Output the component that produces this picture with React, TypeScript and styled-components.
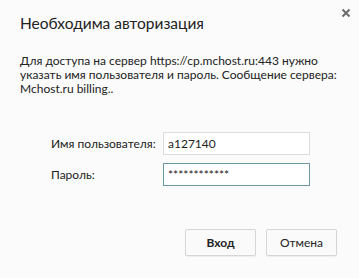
import React from "react";
import styled, { createGlobalStyle } from "styled-components";

const Global = createGlobalStyle`
  html, body { margin: 0; padding: 0; background: #fbfbfb; }
  * { box-sizing: border-box; }
`;

const Dialog = styled.div`
  position: relative;
  width: 359px;
  height: 278px;
  background: #fbfbfb;
  font-family: Lato, "Open Sans", sans-serif;
  color: #222;
  display: flex;
  flex-direction: column;
  padding: 0 20px;
`;

const Title = styled.h1`
  margin: 0;
  padding-top: 12px;
  font-size: 15.5px;
  font-weight: 400;
  line-height: 22px;
  color: #222;
`;

const Close = styled.button`
  position: absolute;
  top: 5px;
  right: 5px;
  width: 16px;
  height: 16px;
  border: 0;
  padding: 0;
  background: transparent;
  display: flex;
  align-items: center;
  justify-content: center;
`;

const Message = styled.p`
  margin: 20px 0 0;
  font-size: 12px;
  line-height: 14px;
  color: #222;
`;

const Form = styled.div`
  margin-top: 36px;
  display: grid;
  grid-template-columns: 112px 147px;
  row-gap: 8px;
  padding-left: 31px;
  align-items: center;
`;

const Label = styled.label`
  font-size: 12px;
  color: #222;
`;

const Input = styled.input<{ $focused?: boolean }>`
  width: 147px;
  height: 23px;
  border: 1px solid ${(p) => (p.$focused ? "#6f98a6" : "#dcdcdc")};
  background: #fff;
  font-family: inherit;
  font-size: 12px;
  color: #222;
  padding: 0 4px;
  outline: none;
`;

const Buttons = styled.div`
  margin-top: 43px;
  display: flex;
  justify-content: flex-end;
  gap: 10px;
  padding-right: 2px;
`;

const Button = styled.button<{ $primary?: boolean }>`
  width: 71px;
  height: 27px;
  border: 1px solid #d6d6d6;
  border-radius: 2px;
  background: #fafafa;
  font-family: inherit;
  font-size: 12px;
  font-weight: ${(p) => (p.$primary ? 700 : 400)};
  color: #222;
  box-shadow: 0 1px 1px rgba(0, 0, 0, 0.06);
`;

export default function App() {
  return (
    <Dialog>
      <Global />
      <Title>Необходима авторизация</Title>
      <Close aria-label="close">
        <svg width="10" height="10" viewBox="0 0 10 10">
          <path d="M1.5 1.5 L8.5 8.5 M8.5 1.5 L1.5 8.5" stroke="#6b6b6b" strokeWidth="2" />
        </svg>
      </Close>
      <Message>
        Для доступа на сервер https://cp.mchost.ru:443 нужно указать имя пользователя и пароль. Сообщение сервера: Mchost.ru billing..
      </Message>
      <Form>
        <Label>Имя пользователя:</Label>
        <Input defaultValue="a127140" />
        <Label>Пароль:</Label>
        <Input $focused defaultValue="************" />
      </Form>
      <Buttons>
        <Button $primary>Вход</Button>
        <Button>Отмена</Button>
      </Buttons>
    </Dialog>
  );
}
